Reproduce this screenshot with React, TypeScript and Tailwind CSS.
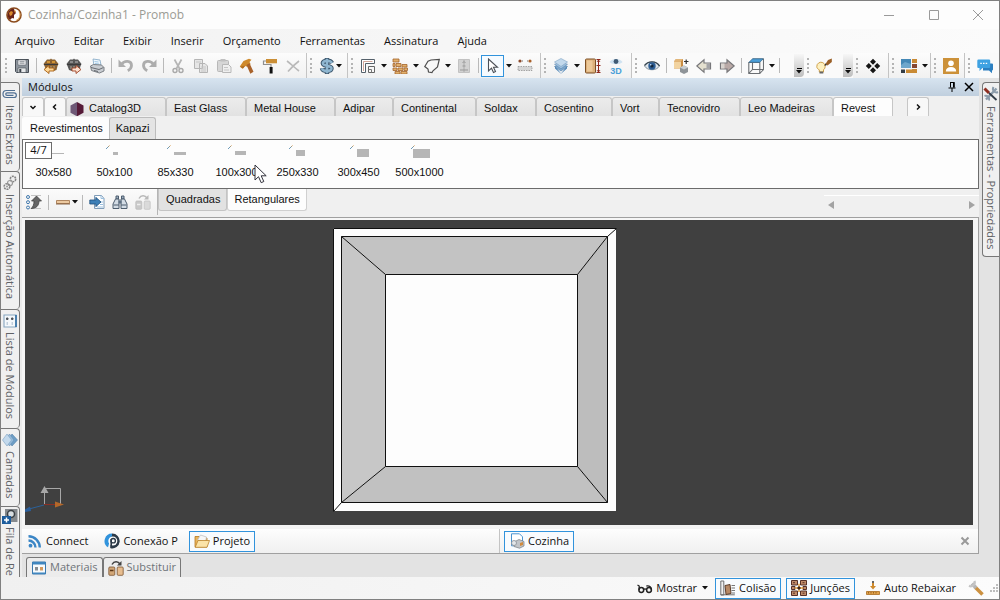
import type { ReactNode } from 'react';
import clsx from 'clsx';

type IconProps = { children: ReactNode; size?: string; box?: string };

function Icon({ children, size = 'size-4', box = '0 0 16 16' }: IconProps) {
  return (
    <svg viewBox={box} className={clsx('shrink-0', size)} fill="none" aria-hidden="true">
      {children}
    </svg>
  );
}

/* ---------- icons ---------- */

const LogoIcon = () => (
  <Icon>
    <circle cx="8" cy="8" r="7" fill="#fff" stroke="#8a4a1c" strokeWidth="1.6" />
    <path d="M8 1.500A6.500 6.500 0 0 0 4 13l2-2 2 .5V8l2-2-1.500-2z" fill="#6a2418" />
    <path d="M3 6l2-2 2 1-1 3-2 1zM8 3l2 1-1 2z" fill="#d98a2c" />
    <path d="M13 4.500a6 6 0 0 1-3 9" stroke="#e2a04a" />
  </Icon>
);
const SaveIcon = () => (
  <Icon>
    <path d="M1.500 1.500h13v13h-12l-1-1z" fill="#8d949c" stroke="#474d55" />
    <path d="M4 2h8v5H4z" fill="#f5f6f7" stroke="#5d636b" strokeWidth=".6" />
    <path d="M5.500 3.700h5M5.500 5.200h5" stroke="#6d747c" strokeWidth=".8" />
    <path d="M4 10h8v4.500H4z" fill="#e6e8ea" stroke="#474d55" strokeWidth=".6" />
    <path d="M5.300 11h2v3h-2z" fill="#3c424a" />
  </Icon>
);
const BasketIcon = ({ back }: { back?: boolean }) => (
  <Icon>
    <path d="M2 4l2-2.500h3l1-1 1 1h3L14 4l1.500 2-1 2-1 4-3 1H6l-3-1-1.500-4-1-2z" fill={back ? '#8a6232' : '#565656'} />
    <path d="M4 3h3v2H4zM9 3h3v2H9z" fill={back ? '#d09436' : '#8a8a8a'} />
    <path d="M1 6.500h14" stroke="#3a3a3a" />
    <path d="M5 8v3M8 8v3M11 8v3" stroke="#b0a390" />
    {back ? (
      <path d="M1 11.500l5-4v2.500h5v3H6v2.500z" fill="#ffd795" stroke="#a65d12" strokeWidth=".9" />
    ) : (
      <path d="M15 11.500l-5-4v2.500H6v3h4v2.500z" fill="#fbe0cf" stroke="#a04424" strokeWidth=".9" />
    )}
  </Icon>
);
const PrinterIcon = () => (
  <Icon>
    <path d="M4 1l7 1 1 5-7 1z" fill="#eef6fc" stroke="#7fa6c4" strokeWidth=".8" />
    <path d="M5.500 3.500l4 .5M6 5.500l4 .5" stroke="#7fb4dc" strokeWidth=".7" />
    <path d="M1.500 8l3-1.500 8 .5 2.500 2.500v3.500l-4.500 2-8-2.500z" fill="#c9cdd2" stroke="#70757b" strokeWidth=".9" />
    <path d="M2 9.500l8 2 4.500-2M5 12.500l4 1" stroke="#5c6167" strokeWidth=".9" />
  </Icon>
);
const UndoIcon = ({ flip }: { flip?: boolean }) => (
  <Icon>
    <g transform={flip ? 'translate(16 0) scale(-1 1)' : undefined}>
      <path d="M3.500 6.500C6.500 2 13.500 2.500 13.500 7.500c0 2.500-1.500 4-3.700 5.300" stroke="#adadad" strokeWidth="2.800" />
      <path d="M.5 1.500V9H8z" fill="#adadad" />
    </g>
  </Icon>
);
const CutIcon = () => (
  <Icon>
    <path d="M4.500 1.500l5 9M11.500 1.500l-5 9" stroke="#b5b5b5" strokeWidth="1.700" />
    <circle cx="5" cy="12.500" r="2" stroke="#a9a9a9" strokeWidth="1.400" />
    <circle cx="11" cy="12.500" r="2" stroke="#a9a9a9" strokeWidth="1.400" />
  </Icon>
);
const CopyIcon = () => (
  <Icon>
    <path d="M1.500 1.500h8v9h-8zM6.500 5.500h5.500l2.500 2.500v6.500h-8z" fill="#e6e6e6" stroke="#b5b5b5" />
    <path d="M8 9h5M8 11h5M8 13h5M3 4h5" stroke="#c6c6c6" />
  </Icon>
);
const PasteIcon = () => (
  <Icon>
    <rect x="1.500" y="2.500" width="11" height="11" rx="1" fill="#d6d6d6" stroke="#b8b8b8" />
    <path d="M4.500 1h5v2.500h-5z" fill="#c0c0c0" />
    <path d="M6.500 6.500h6l2.500 2.500v5.500H6.500z" fill="#efefef" stroke="#b8b8b8" />
    <path d="M8 9.500h4M8 12h5" stroke="#c6c6c6" />
  </Icon>
);
const HammerIcon = () => (
  <Icon>
    <path d="M.8 8.500L4.500 3 10 .8l2.500 1L10.500 4l1.200 2.300L8 8.800 6.500 8l-3 2.800z" fill="#cf8a2c" />
    <path d="M7.500 7l3-1.800 4 8.500-3.200 2z" fill="#a9622a" />
    <path d="M1 8.800l3 1.700L6 7.800" fill="#b06c20" />
  </Icon>
);
const RollerIcon = () => (
  <Icon>
    <path d="M4 1h11v4.300H4z" fill="#cb8f36" />
    <path d="M4 3H1.500v3.500H9v2.500" stroke="#8f8f8f" strokeWidth="1.200" />
    <path d="M7.600 9h3v6.500h-3z" fill="#111" />
  </Icon>
);
const DeleteIcon = () => (
  <Icon>
    <path d="M2 3c4 3 8 7 12 10M14 3C10 6 6 10 3 13.500" stroke="#b9b9b9" strokeWidth="1.600" />
  </Icon>
);
const DollarIcon = () => (
  <Icon>
    <path d="M13 5C12 3 10 2.800 8 2.800 5.500 2.800 3.300 4 4 5.800c.5 2.400 8.500 1.700 8.500 4.400 0 2-2.500 2.700-4.500 2.700-2.500 0-4.700-.9-5-2.700M8 0v16" stroke="#3b556b" strokeWidth="4.400" />
    <path d="M13 5C12 3 10 2.800 8 2.800 5.500 2.800 3.300 4 4 5.800c.5 2.400 8.500 1.700 8.500 4.400 0 2-2.500 2.700-4.500 2.700-2.500 0-4.700-.9-5-2.700M8 .7v14.600" stroke="#8fb6d0" strokeWidth="2.500" />
  </Icon>
);
const WallsIcon = () => (
  <Icon>
    <path d="M1.500 14.500v-13h13v4h-9v9z" fill="#fff" stroke="#55606a" />
    <path d="M3.500 13V3.500h9" stroke="#c58f80" strokeWidth=".8" />
    <path d="M8.500 14.500v-6h6v6z" fill="#f7f7f7" stroke="#666" />
    <path d="M8.500 11.500h3v3" stroke="#777" />
  </Icon>
);
const BricksIcon = () => (
  <Icon>
    <path d="M1 1h6v3H1zM4 5.500h5v3H4zM1 5.500h2v3H1zM1 10h4v2.500H1zM6 10h5v2.500H6zM12 10h3.500v2.500H12zM3 13.500h5V16H3zM9 13.500h6V16H9zM10 6.500h5v2.500h-5z" fill="#e2b06c" stroke="#a4652c" strokeWidth=".8" />
  </Icon>
);
const PolygonIcon = () => (
  <Icon>
    <path d="M.8 8.500L4 3.200 7 2l8.300-.7L13.500 9 9 12.800l-1 1.700-3.500-.5-.5-3z" fill="#f8f8f8" stroke="#4e4e4e" strokeWidth="1.200" />
  </Icon>
);
const BookIcon = () => (
  <Icon>
    <path d="M2.500 1.500h11v13h-11z" fill="#d2d2d2" stroke="#c2c2c2" />
    <path d="M8 2v12" stroke="#aaa" />
    <path d="M6.500 5L8 3.500 9.500 5M6.500 8h3M4 12h8" stroke="#999" />
  </Icon>
);
const PointerIcon = () => (
  <Icon>
    <path d="M3.500 1v12l3-2.800 2 4.300 2-1-2-4.200h4z" fill="#fff" stroke="#4b5058" strokeWidth="1.100" />
  </Icon>
);
const RulerIcon = () => (
  <Icon>
    <path d="M1 8.500h14v4H1z" fill="#d5d5d5" stroke="#8a8a8a" strokeWidth=".7" strokeDasharray="1.500 1" />
    <circle cx="3" cy="3" r="1.600" fill="#8d4a2a" />
    <circle cx="13" cy="3" r="1.600" fill="#a9602a" />
    <path d="M5 3h1M11 3h-1" stroke="#777" />
  </Icon>
);
const LayersIcon = () => (
  <Icon>
    <path d="M2 8l6 7.500L14 8v2.500l-6 5.200-6-5.200z" fill="#4f86b8" />
    <path d="M1.500 8.500L8 13l6.500-4.500L8 6z" fill="#7fa9cf" stroke="#4f7ca6" strokeWidth=".6" />
    <path d="M1.500 6.300L8 10.800l6.500-4.500L8 4z" fill="#9dbfdd" stroke="#5e8ab2" strokeWidth=".6" />
    <path d="M1.500 4L8 8.500 14.500 4 8 .5z" fill="#c3d9ec" stroke="#7da2c4" strokeWidth=".6" />
  </Icon>
);
const DoorIcon = () => (
  <Icon>
    <rect x=".5" y="1" width="10" height="14" rx="1" fill="#dcb07a" stroke="#7d4f24" />
    <path d="M2 2.500h5.500v11H2z" fill="#ecc898" />
    <path d="M11.500 1.500h4M11.500 7.500h4M11.500 14.500h4M13.500 2v12" stroke="#8f2a1c" />
    <path d="M12 4l1.500-2L15 4M12 12l1.500 2 1.500-2" stroke="#8f2a1c" strokeWidth=".8" />
  </Icon>
);
const View3dIcon = () => (
  <Icon>
    <path d="M1.500 4C4 0 12 0 14.500 4 12 7 4 7 1.500 4z" fill="#cfe2f1" />
    <circle cx="8" cy="3.500" r="2.400" fill="#3f5a74" />
    <text x="8" y="15.500" textAnchor="middle" fontSize="9" fontWeight="700" fontFamily="Liberation Sans, sans-serif" fill="#4aa0d8">3D</text>
  </Icon>
);
const EyeIcon = () => (
  <Icon>
    <path d="M.5 8C3.500 3 12.500 2.500 15.500 8c-3 5-12 5-15 0z" fill="#dfe6ec" stroke="#6d7c88" strokeWidth=".8" />
    <path d="M.5 7.500C4 2.500 12.500 2.500 15.500 8" stroke="#36444f" strokeWidth="1.300" />
    <circle cx="8" cy="8" r="3.700" fill="#2b5c93" />
    <circle cx="8" cy="8" r="1.600" fill="#11253c" />
    <circle cx="6.700" cy="6.700" r=".8" fill="#cfe2f5" />
  </Icon>
);
const CubesIcon = () => (
  <Icon>
    <path d="M1 3.500L3 1h7v7l-2 2.500H1z" fill="#c98c42" />
    <path d="M1 3.500h7v7H1z" fill="#f2d3a0" />
    <path d="M1 3.500L3 1h7L8 3.500z" fill="#e2b679" />
    <path d="M11 3.500h4.500M13.200 1.500v4.500" stroke="#333" strokeWidth="1.200" />
    <path d="M7 9.500l4-2 4 2V14l-4 2-4-2z" fill="#8e9499" />
    <path d="M7 9.500l4-2 4 2-4 2z" fill="#c8cdd1" />
  </Icon>
);
const ArrowIcon = ({ flip }: { flip?: boolean }) => (
  <Icon>
    <g transform={flip ? 'translate(16 0) scale(-1 1)' : undefined}>
      <path d="M.8 8L8 1.800V5h6.500v6H8v3.200z" fill={flip ? '#b9a9a6' : '#e4e0cf'} stroke="#77777a" strokeWidth="1.200" />
      <path d="M10.500 5.500v5H14v-5z" fill={flip ? '#d9d4cf' : '#a3a3a6'} />
    </g>
  </Icon>
);
const WireCubeIcon = () => (
  <Icon>
    <path d="M.8 4.500h11v11H.8zM4.500 1h11v10.500l-3.700 4M.8 15.500l3.700-4h11M4.500 5v6.500" stroke="#6b6f73" strokeWidth="1.100" />
    <path d="M1 4.300L4.500.8h10.800l-3.500 3.500z" fill="#4a9ed8" stroke="#37678c" strokeWidth=".7" />
  </Icon>
);
const BulbIcon = () => (
  <Icon>
    <path d="M.8 8.500a4.200 4.200 0 1 1 6.700 3.300V14h-4.200v-2.200C1.600 11 .8 10 .8 8.500z" fill="#fdf0c0" stroke="#cfa04a" />
    <path d="M3.500 14.500h3.800" stroke="#666" strokeWidth="2" />
    <path d="M9.500 6l2.500-4 3.800-1.500V4L11.500 7.500z" fill="#9a5f26" />
    <path d="M8.500 8l2.500-1-1.700-1.700z" fill="#333" />
  </Icon>
);
const DiamondsIcon = () => (
  <Icon>
    <path d="M8 .8L11 3.800 8 6.800 5 3.800zM8 9.200l3 3-3 3-3-3zM3.800 5l3 3-3 3-3-3zM12.200 5l3 3-3 3-3-3z" fill="#161616" />
  </Icon>
);
const MosaicIcon = () => (
  <Icon>
    <path d="M0 1h10v9H0z" fill="#4488b6" />
    <path d="M0 7l4-3 6 2v4H0z" fill="#6ea7cc" />
    <path d="M11 1h5v4h-5zM11 11h5v4H5v-3.500h6z" fill="#c98a34" />
    <path d="M11 6h5v4h-5z" fill="#854732" />
    <path d="M0 11.500h4V15H0z" fill="#333d46" />
  </Icon>
);
const PersonIcon = () => (
  <Icon>
    <path d="M0 0h16v16H0z" fill="#cc9139" />
    <circle cx="8" cy="5.300" r="2.800" fill="#fff" />
    <path d="M2.800 13.500c0-3 2-4.500 5.200-4.500s5.200 1.500 5.200 4.500z" fill="#fff" />
  </Icon>
);
const ChatIcon = () => (
  <Icon>
    <path d="M6 5.500h9a1 1 0 0 1 1 1v5a1 1 0 0 1-1 1v2.800l-3-2.800H6z" fill="#2c7fc0" />
    <path d="M1.500 1.500h10.500a1.200 1.200 0 0 1 1.200 1.200v6A1.200 1.200 0 0 1 12 10H5.500L2.500 13v-3h-1A1.200 1.200 0 0 1 .3 8.700v-6a1.200 1.200 0 0 1 1.200-1.200z" fill="#3fa2e2" />
    <path d="M3.300 5.300h1.500M6 5.300h1.500M8.700 5.300h1.500" stroke="#fff" strokeWidth="1.300" />
  </Icon>
);
const ClipIcon = () => (
  <Icon>
    <path d="M13 4.500H4.500a3.200 3.200 0 0 0 0 7H12a2.300 2.300 0 0 0 0-4.700H5a1.200 1.200 0 0 0 0 2.500h6.500" stroke="#4f6f93" strokeWidth="1.200" />
  </Icon>
);
const ChainIcon = () => (
  <Icon>
    <circle cx="11" cy="4" r="2.700" stroke="#838383" strokeWidth="1.600" strokeDasharray="2 .8" />
    <circle cx="8" cy="8" r="2.500" stroke="#9a9a9a" strokeWidth="1.200" />
    <circle cx="5" cy="11.500" r="2.800" stroke="#838383" strokeWidth="1.600" strokeDasharray="2 .8" />
    <circle cx="5" cy="11.500" r="1" fill="#999" />
  </Icon>
);
const ModulesIcon = () => (
  <Icon>
    <path d="M2 2h12v12H2z" fill="#f4f8fb" stroke="#86a5c0" strokeWidth="1.100" />
    <path d="M14 2v12" stroke="#2f6ea4" strokeWidth="1.600" />
    <path d="M4.500 5H6v1.500H4.500zM9.500 5H11v1.500H9.500z" fill="#4f545a" stroke="#4f545a" />
    <path d="M5.200 9v3M10.200 9v3" stroke="#a9bccd" />
  </Icon>
);
const SideLayersIcon = () => (
  <Icon>
    <path d="M10 2l5.500 6-5.500 6-4-6z" fill="#6f9fc6" stroke="#4f7ca6" strokeWidth=".6" />
    <path d="M7.500 2l4.500 6-4.500 6L3.500 8z" fill="#94b9d8" stroke="#5e8ab2" strokeWidth=".6" />
    <path d="M5 2l4.500 6L5 14 .5 8z" fill="#c3d9ec" stroke="#7da2c4" strokeWidth=".6" />
  </Icon>
);
const QueueIcon = () => (
  <Icon>
    <path d="M3 1h12.500v13H3z" fill="#85898d" />
    <circle cx="9" cy="6" r="3.500" fill="#d8dde1" stroke="#3b4045" strokeWidth="1.500" />
    <path d="M0 8h9v8H0z" fill="#1d5c9c" />
    <path d="M4.500 9.500v5M2 12h5" stroke="#fff" strokeWidth="1.500" />
  </Icon>
);
const ToolsIcon = () => (
  <Icon>
    <path d="M13.500 2.500L3 13.500" stroke="#8c9cab" strokeWidth="2.400" />
    <path d="M10.500 1a3.500 3.500 0 0 0 4.500 5M1.500 10a3.500 3.500 0 0 1 4.500 4.500" stroke="#8c9cab" strokeWidth="2" />
    <path d="M1.500 2.500L6 7" stroke="#8f2f22" strokeWidth="3" />
    <path d="M6 7l7.500 7" stroke="#333d48" strokeWidth="1.800" />
  </Icon>
);
const ListArrowIcon = () => (
  <Icon>
    <circle cx="2" cy="3" r="1.500" stroke="#4079ad" />
    <circle cx="2" cy="8.200" r="1.500" stroke="#4079ad" />
    <circle cx="2" cy="13.500" r="1.500" stroke="#4079ad" />
    <path d="M5 1.500h10M5 14.500h10" stroke="#b5b5b5" strokeWidth=".8" />
    <path d="M10.500 2l5 5h-2.500c0 4.500-2.500 7.500-8 7.500 2-1.500 3-4 3-7.500H5.500z" fill="#666" stroke="#3a3a3a" strokeWidth=".7" />
  </Icon>
);
const PlankIcon = () => (
  <Icon>
    <path d="M1.500 6.500h13v3h-13z" fill="#ecc9a0" stroke="#a87c52" strokeWidth=".9" />
    <path d="M1 10h14" stroke="#80593a" strokeWidth=".9" />
  </Icon>
);
const ImportIcon = () => (
  <Icon>
    <path d="M5.500 1.500h7l2.500 3v10H5.500z" fill="#fff" stroke="#7f9cb8" />
    <path d="M12 1.500v3h3M11 8h3M11 10.500h3M8 13h6" stroke="#9cc0df" />
    <path d="M.8 6h6V3.300L12 8l-5.200 4.700V10h-6z" fill="#3c7fb7" stroke="#1d4f7d" strokeWidth=".8" />
  </Icon>
);
const BinocularsIcon = () => (
  <Icon>
    <path d="M4 2h2.500v3H4zM9.500 2H12v3H9.500z" fill="#9fb0c1" stroke="#4d5d6e" />
    <path d="M3.500 5H7v9.500H1V10zM9 5h3.500L15 10v4.500H9z" fill="#d3dce5" stroke="#4d5d6e" />
    <path d="M6.500 6.500h3v3h-3z" fill="#5e7083" />
    <path d="M1.500 11H7M9 11h5.500" stroke="#4d5d6e" />
  </Icon>
);
const SwapIcon = ({ muted }: { muted?: boolean }) => (
  <Icon>
    <path d="M4 4.500C6 1 10 1 12 4" stroke={muted ? '#b9b9b9' : '#444'} strokeWidth="1.500" />
    <path d="M13.500 1v4.500H9z" fill={muted ? '#b9b9b9' : '#444'} />
    <rect x=".8" y="7" width="6" height="8.300" rx="1" fill={muted ? '#c9c9c9' : '#d2a778'} stroke={muted ? '#bdbdbd' : '#7a5330'} strokeWidth=".8" />
    <rect x="9.200" y="7" width="6" height="8.300" rx="1" fill={muted ? '#dadada' : '#e7bd8f'} stroke={muted ? '#c3c3c3' : '#7a5330'} strokeWidth=".8" />
    <path d="M2 10.500h3.500" stroke={muted ? '#eee' : '#5a3616'} strokeWidth="1.500" />
  </Icon>
);
const HexIcon = () => (
  <Icon>
    <path d="M8 1L1.500 4.500v7.300L8 15.300z" fill="#6e5876" />
    <path d="M8 1l6.500 3.500v7.300L8 15.300z" fill="#551a37" />
  </Icon>
);
const RssIcon = () => (
  <Icon>
    <circle cx="3.500" cy="12.700" r="1.900" fill="#3b86c6" />
    <path d="M1.500 7.500a7 7 0 0 1 7 7M1.500 3.300a11.300 11.300 0 0 1 11.300 11.300" stroke="#3b86c6" strokeWidth="2.400" />
  </Icon>
);
const ConnectPIcon = () => (
  <Icon>
    <path d="M8 .5a7.500 7.500 0 0 0-4 13.800L5.500 9 8 4z" fill="#3193dc" />
    <path d="M8 .5a7.500 7.500 0 1 1-1.500 14.800V4.500L8 3z" fill="#2c3a48" />
    <circle cx="8.800" cy="8" r="4.500" fill="#fff" />
    <path d="M7.200 15V6" stroke="#2c3a48" strokeWidth="1.600" />
    <circle cx="9.200" cy="7.700" r="2.200" stroke="#2c3a48" strokeWidth="1.400" />
  </Icon>
);
const FolderIcon = () => (
  <Icon>
    <path d="M1 14V3.500h4l1 1.500h7v9z" fill="#e9b55c" stroke="#b57a22" strokeWidth=".8" />
    <path d="M3.500 7l3-5 6 2-1 5z" fill="#f7f7f7" stroke="#b9b9b9" strokeWidth=".7" />
    <path d="M1.200 14.300L4 7.500h11.500L13 14.300z" fill="#fbe3a8" stroke="#bd842c" strokeWidth=".8" />
  </Icon>
);
const RoomIcon = () => (
  <Icon>
    <path d="M2.500.8h8l3 3v9h-11z" fill="#fff" stroke="#4a94cf" />
    <path d="M5 9l5-2.500 5 2v4.500l-4.500 2.200L5 13.500z" fill="#c2c5c9" stroke="#777c82" strokeWidth=".7" />
    <circle cx="5" cy="10" r="2.500" fill="#e3e6e9" stroke="#888d93" strokeWidth=".8" />
    <path d="M11 10l3-1v3l-3 1z" fill="#d08a3c" />
  </Icon>
);
const MaterialsIcon = () => (
  <Icon>
    <path d="M1.500 2h13v12h-13z" fill="#f7fafc" stroke="#3a78ad" />
    <path d="M1.500 2h13v2.500h-13zM1.500 12.500h13V14h-13z" fill="#3f86bf" />
    <path d="M4 7h3v3.500H4z" fill="#858c92" />
    <path d="M9 7h3v3.500H9z" fill="#d39a5e" />
  </Icon>
);
const GlassesIcon = () => (
  <Icon>
    <circle cx="4.300" cy="10" r="2.400" stroke="#222" strokeWidth="1.500" />
    <circle cx="12" cy="10" r="2.400" stroke="#222" strokeWidth="1.500" />
    <path d="M2.200 10V6L.5 5M6.500 9.500c1-.8 2-.8 3 0M14.400 10c0-3-1.500-4.500-5-4" stroke="#222" strokeWidth="1.300" />
  </Icon>
);
const CollisionIcon = () => (
  <Icon>
    <path d="M.8 1h3v14h-3zM.8 14.800h14" fill="#f0f0f0" stroke="#6f6f6f" />
    <path d="M5 5.500l5-1 1 9-5 1z" fill="#b78965" stroke="#5e3f2b" />
    <path d="M11.500 5.500h3.500M11.500 8h3.500M11.500 10.500h3.500M11.500 13h3.500" stroke="#777" />
  </Icon>
);
const JunctionIcon = () => (
  <Icon>
    <path d="M.5.500h6v4.500h-6zM9.500.5h6v4.500h-6zM.5 11h6v4.500h-6zM9.500 11h6v4.500h-6zM.5 6.500H4v3H.5zM12 6.500h3.500v3H12z" fill="#c08b68" stroke="#573127" />
    <path d="M2 2.700h2M11.500 2.700h2M2 13.200h2M11.500 13.200h2" stroke="#573127" />
    <path d="M8 3.800V12M4 8h8" stroke="#e7a33c" strokeWidth="1.500" />
    <path d="M8 6l2 2-2 2-2-2z" fill="#3a2018" />
  </Icon>
);
const LowerIcon = () => (
  <Icon>
    <path d="M1.500 11.500h13v3h-13z" fill="#e2a24a" stroke="#a96c1f" strokeWidth=".8" />
    <path d="M3.500 12v1.500M6 12v1.500M8.500 12v1.500M11 12v1.500" stroke="#7d4c10" strokeWidth=".7" />
    <path d="M8 1v2" stroke="#333" strokeWidth="1.500" />
    <path d="M7 3h2v3h2L8 9.500 5 6h2z" fill="#cf8a2c" />
  </Icon>
);
const WrenchIcon = () => (
  <Icon>
    <path d="M7 7l7.500 7.500" stroke="#cc9140" strokeWidth="3.600" />
    <path d="M4 3.500L8 8" stroke="#b5b5b5" strokeWidth="3.600" />
    <path d="M6.500.8a4 4 0 0 1-5.500 5" stroke="#c4c4c4" strokeWidth="2.200" />
  </Icon>
);

/* ---------- toolbar parts ---------- */

const Grip = () => (
  <span className="flex w-2 shrink-0 justify-center">
    <span className="h-[15px] border-l-2 border-dotted border-[#b4b4b4]" />
  </span>
);
const Sep = () => (
  <span className="flex w-[6px] shrink-0 justify-center">
    <span className="h-[15px] w-px bg-[#b9b9b9]" />
  </span>
);
const Caret = () => (
  <Icon size="h-1 w-[6px]" box="0 0 6 4">
    <path d="M0 0h6L3 3.500z" fill="#111" />
  </Icon>
);

function Tool({ label, active, children }: { label: string; active?: boolean; children: ReactNode }) {
  return (
    <button
      type="button"
      aria-label={label}
      className={clsx('flex h-[22px] w-[23px] shrink-0 items-center justify-center', active && 'border border-[#3193dc] bg-[#f6fbff]')}
    >
      {children}
    </button>
  );
}

type DropToolProps = { label: string; active?: boolean; tight?: boolean; children: ReactNode };

function DropTool({ label, active, tight, children }: DropToolProps) {
  return (
    <span className="flex items-center">
      <Tool label={label} active={active}>{children}</Tool>
      <button type="button" aria-label={`Opções: ${label}`} className={clsx('flex h-[22px] w-[9px] items-center justify-center', tight && '-ml-1')}>
        <Caret />
      </button>
    </span>
  );
}

function Group({ className, children }: { className?: string; children: ReactNode }) {
  return (
    <div className={clsx('flex h-full shrink-0 items-center border-r border-[#c4c4c4] bg-linear-to-b from-[#fcfcfc] to-[#f1f1f1]', className)}>
      <Grip />
      {children}
    </div>
  );
}

const Overflow = () => (
  <button type="button" aria-label="Mais botões" className="flex h-[23px] w-[10px] shrink-0 flex-col items-center justify-end gap-px rounded-br-sm bg-linear-to-b from-[#f7f7f7] to-[#bdbdbd] pb-[3px]">
    <span className="h-px w-[5px] bg-black" />
    <Caret />
  </button>
);

function MainToolbar() {
  return (
    <div className="flex h-[25px] shrink-0 overflow-hidden bg-[#fafafa]">
      <Group className="pr-[2px] pl-px">
        <Tool label="Salvar"><SaveIcon /></Tool>
        <Sep />
        <Tool label="Importar"><BasketIcon back /></Tool>
        <Tool label="Exportar"><BasketIcon /></Tool>
        <Tool label="Imprimir"><PrinterIcon /></Tool>
        <Sep />
        <Tool label="Desfazer"><UndoIcon /></Tool>
        <Tool label="Refazer"><UndoIcon flip /></Tool>
        <Sep />
        <Tool label="Recortar"><CutIcon /></Tool>
        <Tool label="Copiar"><CopyIcon /></Tool>
        <Tool label="Colar"><PasteIcon /></Tool>
        <Tool label="Construir"><HammerIcon /></Tool>
        <Tool label="Pintar"><RollerIcon /></Tool>
        <Tool label="Excluir"><DeleteIcon /></Tool>
      </Group>
      <Group className="pr-1">
        <DropTool label="Orçamento" tight><DollarIcon /></DropTool>
      </Group>
      <Group className="pr-1">
        <DropTool label="Paredes"><WallsIcon /></DropTool>
        <DropTool label="Alvenaria"><BricksIcon /></DropTool>
        <DropTool label="Polígono"><PolygonIcon /></DropTool>
        <Tool label="Portas"><BookIcon /></Tool>
        <Sep />
        <DropTool label="Selecionar" active><PointerIcon /></DropTool>
        <Tool label="Medir"><RulerIcon /></Tool>
      </Group>
      <Group className="pr-1">
        <DropTool label="Camadas"><LayersIcon /></DropTool>
        <Tool label="Dimensões"><DoorIcon /></Tool>
        <Tool label="Visualizar 3D"><View3dIcon /></Tool>
      </Group>
      <div className="flex items-center">
        <Grip />
        <Tool label="Visualizar"><EyeIcon /></Tool>
        <Sep />
        <Tool label="Módulos"><CubesIcon /></Tool>
        <Tool label="Anterior"><ArrowIcon /></Tool>
        <Tool label="Próximo"><ArrowIcon flip /></Tool>
        <Sep />
        <DropTool label="Perspectiva"><WireCubeIcon /></DropTool>
        <Sep />
      </div>
      <div className="ml-3 flex items-center">
        <Overflow />
        <Grip />
        <Tool label="Iluminação"><BulbIcon /></Tool>
      </div>
      <div className="ml-2 flex items-center">
        <Overflow />
      </div>
      <Group className="pr-1">
        <Tool label="Componentes"><DiamondsIcon /></Tool>
      </Group>
      <Group className="pr-px">
        <DropTool label="Painéis"><MosaicIcon /></DropTool>
      </Group>
      <Group className="pr-[2px]">
        <Tool label="Conta"><PersonIcon /></Tool>
      </Group>
      <div className="flex items-center">
        <Grip />
        <Tool label="Chat"><ChatIcon /></Tool>
      </div>
    </div>
  );
}

/* ---------- panels ---------- */

const menus = ['Arquivo', 'Editar', 'Exibir', 'Inserir', 'Orçamento', 'Ferramentas', 'Assinatura', 'Ajuda'];

const catalogs = [
  { name: 'East Glass', width: 'w-20' },
  { name: 'Metal House', width: 'w-[89px]' },
  { name: 'Adipar', width: 'w-[58px]' },
  { name: 'Continental', width: 'w-[83px]' },
  { name: 'Soldax', width: 'w-[60px]' },
  { name: 'Cosentino', width: 'w-[76px]' },
  { name: 'Vort', width: 'w-[47px]' },
  { name: 'Tecnovidro', width: 'w-[81px]' },
  { name: 'Leo Madeiras', width: 'w-[93px]' },
];

const pieces = [
  { name: '30x580', w: 18, h: 1 },
  { name: '50x100', w: 5, h: 3 },
  { name: '85x330', w: 12, h: 3 },
  { name: '100x300', w: 11, h: 4 },
  { name: '250x330', w: 9, h: 6 },
  { name: '300x450', w: 12, h: 8 },
  { name: '500x1000', w: 17, h: 9 },
];

const sideTabs = [
  { name: 'Itens Extras', icon: <ClipIcon />, height: 'h-[89px]' },
  { name: 'Inserção Automática', icon: <ChainIcon />, height: 'h-[138px]' },
  { name: 'Lista de Módulos', icon: <ModulesIcon />, height: 'h-[119px]' },
  { name: 'Camadas', icon: <SideLayersIcon />, height: 'h-[78px]' },
];

const tabBase = 'flex shrink-0 items-center rounded-t-[3px] border border-b-0 border-[#c6c6c6]';
const tabIdle = 'bg-linear-to-b from-[#ececec] to-[#e2e2e2]';

function CatalogTabs() {
  return (
    <div className="flex h-5 shrink-0 overflow-hidden pt-px" role="tablist">
      <button type="button" aria-label="Lista de catálogos" className={clsx(tabBase, 'w-[22px] justify-center bg-[#f8f8f8]')}>
        <Icon size="size-2" box="0 0 8 8"><path d="M1.500 3L4 5.500 6.500 3" stroke="#111" strokeWidth="1.500" /></Icon>
      </button>
      <button type="button" aria-label="Catálogo anterior" className={clsx(tabBase, 'w-[22px] justify-center bg-[#f8f8f8]')}>
        <Icon size="size-2" box="0 0 8 8"><path d="M5 1.500L2.500 4 5 6.500" stroke="#111" strokeWidth="1.500" /></Icon>
      </button>
      <button type="button" role="tab" className={clsx(tabBase, tabIdle, 'w-[100px] gap-1 pt-[3px] pl-[2px]')}>
        <HexIcon />
        Catalog3D
      </button>
      {catalogs.map((tab) => (
        <button key={tab.name} type="button" role="tab" className={clsx(tabBase, tabIdle, tab.width, 'pt-[3px] pl-[7px] whitespace-nowrap')}>
          {tab.name}
        </button>
      ))}
      <button type="button" role="tab" aria-selected="true" className={clsx(tabBase, 'w-[60px] bg-[#fdfdfd] pt-[3px] pl-[7px]')}>
        Revest
      </button>
      <button type="button" aria-label="Próximo catálogo" className={clsx(tabBase, 'ml-[14px] w-[22px] justify-center bg-[#f8f8f8]')}>
        <Icon size="size-2" box="0 0 8 8"><path d="M3 1.500L5.500 4 3 6.500" stroke="#111" strokeWidth="1.500" /></Icon>
      </button>
    </div>
  );
}

function PieceList() {
  return (
    <div className="relative flex h-[50px] shrink-0 border border-[#6c6c6c] bg-[#fdfdfd]">
      {pieces.map((piece) => (
        <button key={piece.name} type="button" className="flex w-[61px] shrink-0 flex-col items-center">
          <svg viewBox="0 0 24 24" className="size-6" aria-hidden="true">
            <path d="M3 9l3-3" stroke="#6d9ab8" strokeWidth="1" />
            <path d="M5.500 6.500l1-1" stroke="#d89a4a" strokeWidth="1" />
            <rect x={Math.min(10, 22 - piece.w)} y={13 - Math.floor(piece.h / 2)} width={piece.w} height={piece.h} fill="#b6b6b6" />
          </svg>
          <span className="leading-4">{piece.name}</span>
        </button>
      ))}
      <span className="absolute top-[2px] left-[2px] flex h-[17px] w-[27px] items-center justify-center border border-[#6c6c6c] bg-white font-['Open_Sans',sans-serif] text-[11px]">
        4/7
      </span>
      <svg viewBox="0 0 14 20" className="absolute top-6 left-[231px] h-5 w-[14px]" aria-hidden="true">
        <path d="M1 1v15l3.500-3.300 2.700 6 2.600-1.200-2.600-5.700h5z" fill="#fff" stroke="#30303a" />
      </svg>
    </div>
  );
}

function Viewport() {
  return (
    <div className="min-h-0 flex-1 border-t border-r border-[#a0a0a0] bg-[#f6f6f6] pt-[2px] pr-[5px] pl-[3px]">
      <div className="h-full bg-[#404040]">
        <svg viewBox="0 0 948 305" className="h-full w-full" role="img" aria-label="Vista superior do ambiente">
          <path d="M308 8h283v283H308z" fill="#fdfdfd" />
          <path d="M316.500 16.500h266L552.500 54.500h-192z" fill="#c3c3c3" />
          <path d="M316.500 282.500h266L552.500 246.500h-192z" fill="#c1c1c1" />
          <path d="M316.500 16.500v266l44-36v-192z" fill="#c7c7c7" />
          <path d="M582.500 16.500v266l-30-36v-192z" fill="#bdbdbd" />
          <path d="M360.500 54.500h192v192h-192z" fill="#fdfdfd" />
          <g stroke="#101010" fill="none">
            <path d="M308.500 291V8.500H591M316.500 16.500h266v266h-266zM360.500 54.500h192v192h-192z" />
            <path d="M316.500 16.500l44 38M582.500 16.500l-30 38M316.500 282.500l44-36M582.500 282.500l-30-36M308.500 291.500l8-9M582.500 16.500l9-8" />
          </g>
          <path d="M19.500 284.500v-16h16v16" stroke="#a8a8a8" fill="none" />
          <path d="M19.500 266l4 7h-8z" fill="#a8a8a8" />
          <path d="M19 284.500h12" stroke="#8c2f24" />
          <path d="M30 281.500l9 3-9 3z" fill="#b4682a" />
          <path d="M19 285L4 289" stroke="#2b6199" />
          <path d="M0 289.500l5-3 1 4.500-6 1z" fill="#2b5f9c" />
        </svg>
      </div>
    </div>
  );
}

function TextTool({ icon, label, active }: { icon: ReactNode; label: string; active?: boolean }) {
  return (
    <button type="button" className={clsx('flex h-[21px] items-center gap-[3px] border px-1 whitespace-nowrap', active ? 'border-[#3193dc] bg-[#f8fbfe]' : 'border-transparent')}>
      {icon}
      {label}
    </button>
  );
}

export default function App() {
  return (
    <div className="flex h-screen flex-col overflow-hidden border border-[#808080] bg-[#e3e3e3] font-['Open_Sans',sans-serif] text-[11px] text-[#111]">
      <header className="flex h-7 shrink-0 items-center bg-[#fdfdfd] pl-[5px]">
        <LogoIcon />
        <h1 className="ml-[6px] flex-1 text-xs text-[#9b9b94]">Cozinha/Cozinha1 - Promob</h1>
        <div className="flex text-[#9a9a9a]">
          <button type="button" aria-label="Minimizar" className="flex w-[45px] justify-center">
            <Icon size="size-3" box="0 0 12 12"><path d="M1 6.500h10" stroke="currentColor" /></Icon>
          </button>
          <button type="button" aria-label="Maximizar" className="flex w-[46px] justify-center">
            <Icon size="size-3" box="0 0 12 12"><path d="M1.500 1.500h9v9h-9z" stroke="currentColor" /></Icon>
          </button>
          <button type="button" aria-label="Fechar" className="flex w-[42px] justify-center">
            <Icon size="size-3" box="0 0 12 12"><path d="M1 1l10 10M11 1L1 11" stroke="currentColor" /></Icon>
          </button>
        </div>
      </header>

      <nav className="flex h-6 shrink-0 items-center gap-[19px] bg-linear-to-r from-[#f2f2f2] to-[#fbfbfb] pl-[14px]">
        {menus.map((menu) => (
          <button key={menu} type="button">{menu}</button>
        ))}
      </nav>

      <MainToolbar />

      <div className="flex min-h-0 flex-1">
        <aside className="flex w-[21px] shrink-0 flex-col overflow-hidden bg-[#ececec] pt-1 pr-[2px] text-[#5f6266]">
          {sideTabs.map((tab) => (
            <button
              key={tab.name}
              type="button"
              className={clsx('flex shrink-0 flex-col items-center gap-[3px] rounded-r-[4px] border border-b-0 border-l-0 border-[#777] bg-[#f0f0f0] pt-[3px]', tab.height)}
            >
              {tab.icon}
              <span className="leading-4 whitespace-nowrap [writing-mode:vertical-rl]">{tab.name}</span>
            </button>
          ))}
          <button type="button" className="flex min-h-0 flex-1 flex-col items-center gap-[3px] rounded-tr-[4px] border-t border-r border-[#777] bg-[#f0f0f0] pt-px">
            <QueueIcon />
            <span className="leading-4 whitespace-nowrap [writing-mode:vertical-rl]">Fila de Re</span>
          </button>
        </aside>

        <main className="flex min-w-0 flex-1 flex-col">
          <section className="flex min-h-0 flex-1 flex-col bg-[#f0f0f0] font-['Liberation_Sans',Arial,sans-serif] text-[11px]">
            <div className="flex h-[18px] shrink-0 items-center justify-between bg-linear-to-b from-[#d7e4f0] to-[#c0cfde] pr-1 pl-[6px] font-['Open_Sans',sans-serif]">
              <h2>Módulos</h2>
              <div className="flex gap-[5px]">
                <button type="button" aria-label="Fixar painel">
                  <Icon size="size-3" box="0 0 12 12"><path d="M4 1.500h4.500M4.500 1.500v5M7.500 1.500v5M8.300 1.500v5M2.500 7h7M6 7v4" stroke="#000" /></Icon>
                </button>
                <button type="button" aria-label="Fechar painel">
                  <Icon size="size-3" box="0 0 12 12"><path d="M2 2l8 8M10 2l-8 8" stroke="#000" strokeWidth="1.500" /></Icon>
                </button>
              </div>
            </div>

            <CatalogTabs />

            <div className="flex h-[23px] shrink-0 items-end" role="tablist">
              <button type="button" role="tab" aria-selected="true" className="h-[22px] rounded-t-[3px] bg-[#fdfdfd] pr-[6px] pl-2">Revestimentos</button>
              <button type="button" role="tab" className="h-[22px] rounded-t-[3px] border border-b-0 border-[#bcbcbc] bg-[#e4e4e4] px-[6px]">Kapazi</button>
            </div>

            <PieceList />

            <div className="flex h-7 shrink-0">
              <div className="flex h-[26px] w-[136px] items-center border-r border-[#b5b5b5] bg-linear-to-b from-[#fbfbfb] to-[#f0f0f0]">
                <Tool label="Subir nível"><ListArrowIcon /></Tool>
                <Sep />
                <DropTool label="Acabamento" tight><PlankIcon /></DropTool>
                <Sep />
                <Tool label="Inserir"><ImportIcon /></Tool>
                <Tool label="Localizar"><BinocularsIcon /></Tool>
                <Tool label="Substituir"><SwapIcon muted /></Tool>
              </div>
              <div className="flex flex-1" role="tablist">
                <button type="button" role="tab" className="h-[22px] rounded-b-[3px] border border-t-0 border-[#c4c4c4] bg-[#e2e2e2] pr-[6px] pl-[7px]">Quadradas</button>
                <button type="button" role="tab" aria-selected="true" className="h-[22px] rounded-b-[3px] border border-t-0 border-[#d0d0d0] bg-[#fdfdfd] px-[6px]">Retangulares</button>
              </div>
              <div className="mt-[6px] flex h-[18px] w-[155px] items-center justify-between border-t border-white px-1">
                <button type="button" aria-label="Rolar para a esquerda">
                  <Icon size="h-2 w-[6px]" box="0 0 6 8"><path d="M6 0v8L0 4z" fill="#a3a3a3" /></Icon>
                </button>
                <button type="button" aria-label="Rolar para a direita">
                  <Icon size="h-2 w-[6px]" box="0 0 6 8"><path d="M0 0v8l6-4z" fill="#a3a3a3" /></Icon>
                </button>
              </div>
            </div>

            <Viewport />
          </section>

          <div className="flex h-[29px] shrink-0 items-end border-r border-b border-[#a0a0a0] bg-[#f3f3f3] pt-1">
            <div className="flex h-full w-1/2 items-center gap-[6px] border-r border-[#c4c4c4] bg-linear-to-b from-[#fdfdfd] to-[#f0f0f0]">
              <TextTool icon={<RssIcon />} label="Connect" />
              <TextTool icon={<ConnectPIcon />} label="Conexão P" />
              <TextTool icon={<FolderIcon />} label="Projeto" active />
            </div>
            <div className="flex h-full flex-1 items-center justify-between bg-linear-to-b from-[#fdfdfd] to-[#f0f0f0] pr-[7px] pl-1">
              <TextTool icon={<RoomIcon />} label="Cozinha" active />
              <button type="button" aria-label="Fechar ambiente">
                <Icon size="size-3" box="0 0 12 12"><path d="M2.500 2.500l7 7M9.500 2.500l-7 7" stroke="#999" strokeWidth="2" /></Icon>
              </button>
            </div>
          </div>

          <div className="flex h-[23px] shrink-0 pt-[3px] pl-1 text-[#6f7479]">
            <button type="button" className="flex items-center gap-[3px] rounded-t-[3px] border border-b-0 border-[#777] bg-[#ececec] px-1">
              <MaterialsIcon />
              Materiais
            </button>
            <button type="button" className="flex items-center gap-[3px] rounded-t-[3px] border border-b-0 border-[#777] bg-[#ececec] px-1">
              <SwapIcon />
              Substituir
            </button>
          </div>
        </main>

        <aside className="w-5 shrink-0 pt-1 pl-[3px] text-[#5f6266]">
          <button type="button" className="flex h-[175px] w-full flex-col items-center gap-1 rounded-l-[4px] border border-r-0 border-[#777] bg-[#f0f0f0] pt-[3px]">
            <ToolsIcon />
            <span className="leading-4 whitespace-nowrap [writing-mode:vertical-rl]">Ferramentas - Propriedades</span>
          </button>
        </aside>
      </div>

      <footer className="flex h-[22px] shrink-0 items-center justify-end gap-[5px] bg-linear-to-r from-[#f0f0f0] to-[#fcfcfc]">
        <button type="button" className="mr-[2px] flex items-center gap-[3px]">
          <GlassesIcon />
          Mostrar
          <span className="ml-[2px]"><Caret /></span>
        </button>
        <TextTool icon={<CollisionIcon />} label="Colisão" active />
        <TextTool icon={<JunctionIcon />} label="Junções" active />
        <TextTool icon={<LowerIcon />} label="Auto Rebaixar" />
        <button type="button" aria-label="Configurações" className="ml-[2px]"><WrenchIcon /></button>
        <Icon size="size-[10px]" box="0 0 10 10">
          <path d="M7 1h2v2H7zM7 4h2v2H7zM7 7h2v2H7zM4 4h2v2H4zM4 7h2v2H4zM1 7h2v2H1z" fill="#bdbdbd" />
        </Icon>
      </footer>
    </div>
  );
}
